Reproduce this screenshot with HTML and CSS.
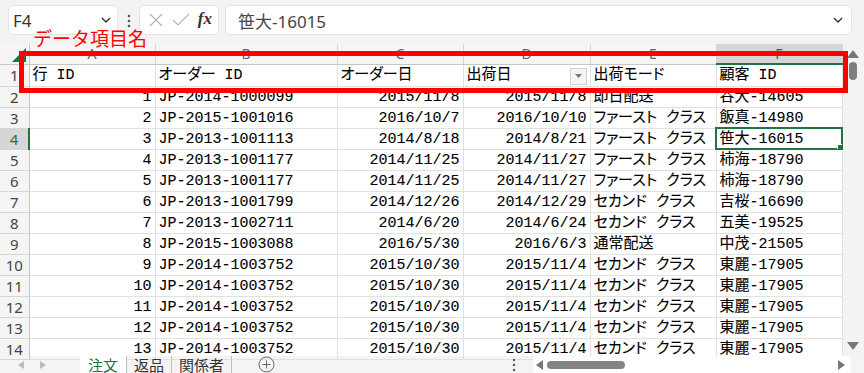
FILE: index.html
```html
<!DOCTYPE html>
<html lang="ja">
<head>
    <meta charset="UTF-8">
    <meta name="viewport" content="width=device-width, initial-scale=1.0">
    <title>注文 - Excel</title>
    <link rel="stylesheet" href="styles.css">
</head>
<body>
    <div class="app">
        <div class="toolbar">
            <div class="namebox">
                <span>F4</span>
                <svg class="chev" width="10" height="6" viewBox="0 0 10 6"><path d="M1 1l4 4 4-4" fill="none" stroke="#333" stroke-width="1.4"/></svg>
            </div>
            <svg class="grip" width="4" height="14" viewBox="0 0 4 14"><circle cx="2" cy="2" r="1.3" fill="#555"/><circle cx="2" cy="7" r="1.3" fill="#555"/><circle cx="2" cy="12" r="1.3" fill="#555"/></svg>
            <div class="fbtns">
                <svg width="16" height="16" viewBox="0 0 16 16"><path d="M2 2l12 12M14 2L2 14" stroke="#b5b5b5" stroke-width="1.2"/></svg>
                <svg width="18" height="16" viewBox="0 0 18 16"><path d="M1 8l5 5L17 2" fill="none" stroke="#b5b5b5" stroke-width="1.2"/></svg>
                <span class="fx">fx</span>
            </div>
            <div class="formula">
                <span>笹大-16015</span>
                <svg class="chev" width="10" height="6" viewBox="0 0 10 6"><path d="M1 1l4 4 4-4" fill="none" stroke="#333" stroke-width="1.4"/></svg>
            </div>
        </div>

        <div class="main">
            <table class="sheet">
                <colgroup>
                    <col style="width:29px"><col style="width:126px"><col style="width:182px"><col style="width:126px">
                    <col style="width:127px"><col style="width:126px"><col style="width:126px">
                </colgroup>
                <tr class="colhead">
                    <th class="corner"><svg width="14" height="14" viewBox="0 0 14 14"><path d="M14 0V14H0z" fill="#217346"/></svg></th>
                    <th>A</th><th>B</th><th>C</th><th>D</th><th>E</th><th class="on">F</th>
                </tr>
                <tr class="first">
                    <th>1</th><td>行 ID</td><td>オーダー ID</td><td>オーダー日</td>
                    <td><div class="filter"><span>出荷日</span><span class="drop"><svg width="7" height="4" viewBox="0 0 7 4"><path d="M0 0h7L3.5 4z" fill="#777"/></svg></span></div></td>
                    <td>出荷モード</td><td>顧客 ID</td>
                </tr>
                <tr><th>2</th><td class="r">1</td><td>JP-2014-1000099</td><td class="r">2015/11/8</td><td class="r">2015/11/8</td><td>即日配送</td><td>谷大-14605</td></tr>
                <tr><th>3</th><td class="r">2</td><td>JP-2015-1001016</td><td class="r">2016/10/7</td><td class="r">2016/10/10</td><td>ファースト クラス</td><td>飯真-14980</td></tr>
                <tr><th class="on">4</th><td class="r">3</td><td>JP-2013-1001113</td><td class="r">2014/8/18</td><td class="r">2014/8/21</td><td>ファースト クラス</td><td class="sel">笹大-16015</td></tr>
                <tr><th>5</th><td class="r">4</td><td>JP-2013-1001177</td><td class="r">2014/11/25</td><td class="r">2014/11/27</td><td>ファースト クラス</td><td>柿海-18790</td></tr>
                <tr><th>6</th><td class="r">5</td><td>JP-2013-1001177</td><td class="r">2014/11/25</td><td class="r">2014/11/27</td><td>ファースト クラス</td><td>柿海-18790</td></tr>
                <tr><th>7</th><td class="r">6</td><td>JP-2013-1001799</td><td class="r">2014/12/26</td><td class="r">2014/12/29</td><td>セカンド クラス</td><td>吉桜-16690</td></tr>
                <tr><th>8</th><td class="r">7</td><td>JP-2013-1002711</td><td class="r">2014/6/20</td><td class="r">2014/6/24</td><td>セカンド クラス</td><td>五美-19525</td></tr>
                <tr><th>9</th><td class="r">8</td><td>JP-2015-1003088</td><td class="r">2016/5/30</td><td class="r">2016/6/3</td><td>通常配送</td><td>中茂-21505</td></tr>
                <tr><th>10</th><td class="r">9</td><td>JP-2014-1003752</td><td class="r">2015/10/30</td><td class="r">2015/11/4</td><td>セカンド クラス</td><td>東麗-17905</td></tr>
                <tr><th>11</th><td class="r">10</td><td>JP-2014-1003752</td><td class="r">2015/10/30</td><td class="r">2015/11/4</td><td>セカンド クラス</td><td>東麗-17905</td></tr>
                <tr><th>12</th><td class="r">11</td><td>JP-2014-1003752</td><td class="r">2015/10/30</td><td class="r">2015/11/4</td><td>セカンド クラス</td><td>東麗-17905</td></tr>
                <tr><th>13</th><td class="r">12</td><td>JP-2014-1003752</td><td class="r">2015/10/30</td><td class="r">2015/11/4</td><td>セカンド クラス</td><td>東麗-17905</td></tr>
                <tr><th>14</th><td class="r">13</td><td>JP-2014-1003752</td><td class="r">2015/10/30</td><td class="r">2015/11/4</td><td>セカンド クラス</td><td>東麗-17905</td></tr>
            </table>
            <div class="vscroll">
                <svg width="12" height="8" viewBox="0 0 12 8"><path d="M6 0l6 8H0z" fill="#777"/></svg>
                <div class="vthumb"></div>
                <svg class="down" width="12" height="8" viewBox="0 0 12 8"><path d="M0 0h12L6 8z" fill="#777"/></svg>
            </div>
        </div>

        <div class="tabbar">
            <div class="nav">
                <svg width="6" height="8" viewBox="0 0 6 8"><path d="M6 0v8L0 4z" fill="#bbb"/></svg>
                <svg width="6" height="8" viewBox="0 0 6 8"><path d="M0 0v8l6-4z" fill="#bbb"/></svg>
            </div>
            <div class="tab active">注文</div>
            <div class="tab">返品</div>
            <div class="tab">関係者</div>
            <svg class="add" width="17" height="17" viewBox="0 0 17 17"><circle cx="8.5" cy="8.5" r="7.5" fill="none" stroke="#666"/><path d="M8.5 4.5v8M4.5 8.5h8" stroke="#666"/></svg>
            <svg class="dots" width="4" height="14" viewBox="0 0 4 14"><circle cx="2" cy="2" r="1.2" fill="#555"/><circle cx="2" cy="7" r="1.2" fill="#555"/><circle cx="2" cy="12" r="1.2" fill="#555"/></svg>
            <div class="hscroll">
                <svg width="7" height="10" viewBox="0 0 7 10"><path d="M7 0v10L0 5z" fill="#777"/></svg>
                <div class="hthumb"></div>
                <svg class="right" width="7" height="10" viewBox="0 0 7 10"><path d="M0 0v10l7-5z" fill="#777"/></svg>
            </div>
        </div>

        <!-- annotation over the header row -->
        <div class="note">データ項目名</div>
        <div class="frame"></div>
    </div>
</body>
</html>
```

FILE: styles.css
```css
body {
    margin: 0;
    font-family: "Noto Sans CJK JP", "Noto Sans", sans-serif;
    color: #111;
    background: #fff;
}
.app {
    position: relative;
    width: 864px;
    height: 373px;
    overflow: hidden;
}
.toolbar {
    height: 44px;
    background: #f3f3f3;
    display: flex;
    align-items: flex-start;
    padding: 5px 8px 0;
    box-sizing: border-box;
}
.namebox, .fbtns, .formula {
    height: 30px;
    background: #fff;
    border: 1px solid #e4e4e4;
    border-radius: 5px;
    box-sizing: border-box;
    display: flex;
    align-items: center;
}
.namebox {
    width: 110px;
    padding: 0 6px 0 4px;
    justify-content: space-between;
    font: 17px "Noto Sans", sans-serif;
    color: #333;
}
.grip {
    margin: 9px 8px 0 9px;
}
.fbtns {
    width: 80px;
    padding: 0 6px 0 8px;
    justify-content: space-between;
}
.fx {
    font: italic bold 17px "Liberation Serif", serif;
    color: #333;
    margin-top: -2px;
}
.formula {
    width: 627px;
    margin-left: 6px;
    padding: 0 8px 0 12px;
    justify-content: space-between;
    font: 17px "Noto Sans", "Noto Sans CJK JP", sans-serif;
    color: #444;
}

.main {
    display: flex;
    height: 312px;
}
.sheet {
    table-layout: fixed;
    border-collapse: collapse;
    width: 842px;
    font: 15px "Liberation Mono", "Noto Sans CJK JP", monospace;
    font-feature-settings: "palt";
    color: #000;
    -webkit-text-stroke: 0.1px #000;
}
.sheet td, .sheet th {
    border: 1px solid #e1e1e1;
    padding: 2px 3px 0;
    white-space: nowrap;
    overflow: hidden;
    line-height: 18px;
}
.sheet tr {
    height: 20.8px;
}
.sheet tr.first {
    height: 22px;
}
.sheet th {
    font: 15px "Noto Sans", sans-serif;
    color: #444;
    background: #f5f5f5;
    font-weight: normal;
    border-color: #d6d6d6;
    padding: 0;
    -webkit-text-stroke: 0;
}
.colhead {
    height: 20px !important;
}
.colhead th {
    font-size: 14px;
    color: #666;
    border-top: none;
    border-bottom-color: #c6c6c6;
    line-height: 16px;
}
.sheet th.corner {
    text-align: right;
    vertical-align: bottom;
    border-left: none;
}
.corner svg {
    display: block;
    margin: 0 3px 2px auto;
}
.sheet tr > th:first-child {
    border-left: none;
    border-right-color: #c6c6c6;
}
.sheet th.on {
    background: #d6d6d6;
    color: #1e7145;
}
.colhead th.on {
    border-bottom: 2px solid #217346;
}
tr > th.on:first-child {
    border-right: 2px solid #217346;
}
.sheet .r {
    text-align: right;
}
.sheet td.sel {
    position: relative;
    outline: 2px solid #217346;
    outline-offset: -1px;
}
.sel::after {
    content: "";
    position: absolute;
    right: -2px;
    bottom: -2px;
    width: 5px;
    height: 5px;
    background: #217346;
    border: 1px solid #fff;
}
.filter {
    display: flex;
    justify-content: space-between;
    align-items: center;
}
.drop {
    width: 17px;
    height: 17px;
    box-sizing: border-box;
    border: 1px solid #cfcfcf;
    background: #f4f4f4;
    display: flex;
    align-items: center;
    justify-content: center;
}

.vscroll {
    width: 22px;
    background: #f3f3f3;
    display: flex;
    flex-direction: column;
    align-items: center;
    padding-top: 6px;
    box-sizing: border-box;
}
.vthumb {
    width: 8px;
    height: 18px;
    margin-top: 4px;
    border-radius: 4px;
    background: #7f7f7f;
}
.vscroll .down {
    margin-top: auto;
    margin-bottom: 6px;
}

.tabbar {
    height: 17px;
    background: #f5f3f3;
    display: flex;
    align-items: center;
    font-size: 15px;
    color: #333;
}
.nav {
    width: 80px;
    display: flex;
    gap: 16px;
    padding-left: 18px;
    box-sizing: border-box;
}
.tab {
    height: 17px;
    padding: 0 7px;
    line-height: 17px;
    overflow: hidden;
    border-right: 1px solid #bcbcbc;
}
.tab.active {
    background: #fff;
    color: #1e7145;
    padding: 0 8px;
}
.add {
    margin-left: 26px;
}
.dots {
    margin-left: 237px;
}
.hscroll {
    margin-left: 17px;
    width: 318px;
    height: 17px;
    background: #fff;
    display: flex;
    align-items: center;
    padding: 0 6px 0 3px;
    box-sizing: border-box;
}
.hthumb {
    width: 78px;
    height: 8px;
    margin-left: 4px;
    border-radius: 4px;
    background: #858585;
}
.hscroll .right {
    margin-left: auto;
}

.note {
    position: absolute;
    left: 33px;
    top: 26px;
    font-size: 19px;
    line-height: 24px;
    color: #ff0000;
}
.frame {
    position: absolute;
    left: 19px;
    top: 51px;
    width: 829px;
    height: 42px;
    border: 5px solid #ff0000;
    box-sizing: border-box;
}
```
